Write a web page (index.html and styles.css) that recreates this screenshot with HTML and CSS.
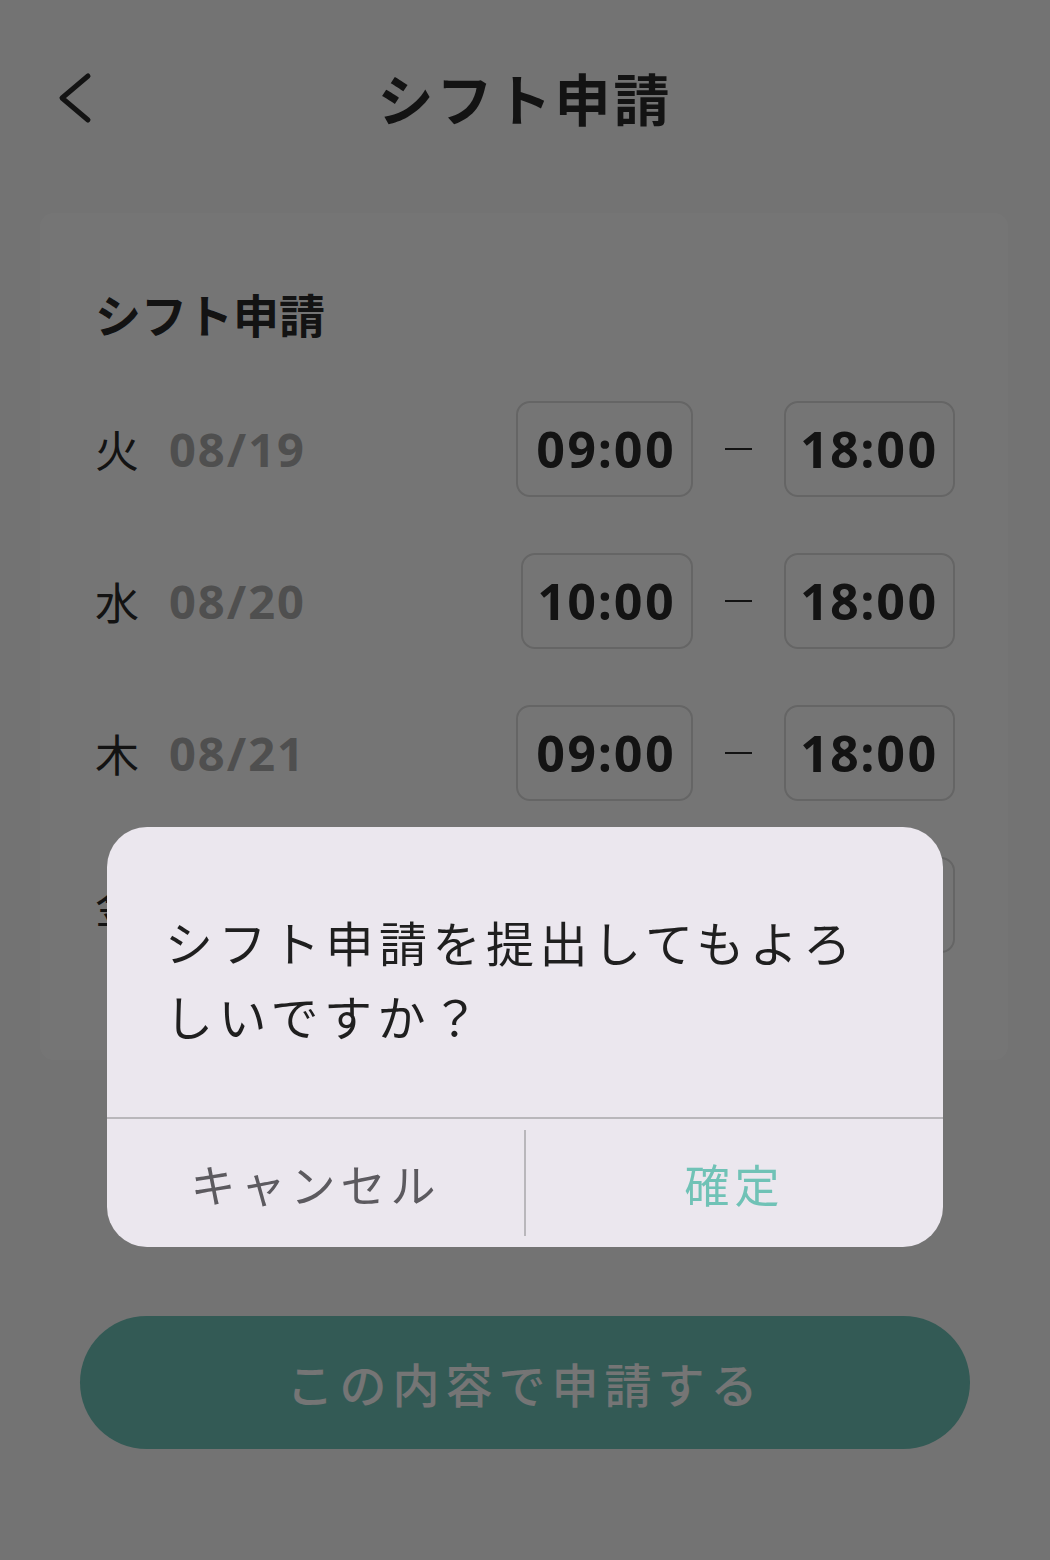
FILE: index.html
```html
<!DOCTYPE html>
<html lang="ja">

<head>
  <meta charset="utf-8">
  <title>シフト申請</title>
  <link rel="stylesheet" href="styles.css">
</head>

<body>
  <header class="topbar">
    <button class="back-btn" aria-label="戻る">
      <svg width="40" height="56" viewBox="0 0 40 56">
        <polyline points="32,4 6,26 32,48" fill="none" stroke="currentColor" stroke-width="5"
          stroke-linecap="round" stroke-linejoin="round" />
      </svg>
    </button>
    <h1 class="page-title">シフト申請</h1>
  </header>

  <section class="card">
    <h2 class="card-title">シフト申請</h2>
    <ul class="shift-list">
      <li class="shift-row">
        <div class="shift-day"><span class="day">火</span><span class="date">08/19</span></div>
        <div class="times">
          <span class="time-box">09:00</span>
          <span class="dash"></span>
          <span class="time-box">18:00</span>
        </div>
      </li>
      <li class="shift-row">
        <div class="shift-day"><span class="day">水</span><span class="date">08/20</span></div>
        <div class="times">
          <span class="time-box">10:00</span>
          <span class="dash"></span>
          <span class="time-box">18:00</span>
        </div>
      </li>
      <li class="shift-row">
        <div class="shift-day"><span class="day">木</span><span class="date">08/21</span></div>
        <div class="times">
          <span class="time-box">09:00</span>
          <span class="dash"></span>
          <span class="time-box">18:00</span>
        </div>
      </li>
      <li class="shift-row">
        <div class="shift-day"><span class="day">金</span><span class="date">08/22</span></div>
        <div class="times">
          <span class="time-box">09:00</span>
          <span class="dash"></span>
          <span class="time-box">18:00</span>
        </div>
      </li>
    </ul>
  </section>

  <button class="submit-btn">この内容で申請する</button>

  <!-- confirm dialog -->
  <div class="modal-backdrop">
    <div class="dialog">
      <p class="dialog-message">シフト申請を提出してもよろしいですか？</p>
      <div class="dialog-actions">
        <button class="dialog-btn cancel">キャンセル</button>
        <span class="dialog-sep"></span>
        <button class="dialog-btn confirm">確定</button>
      </div>
    </div>
  </div>
</body>

</html>
```

FILE: styles.css
```css
body {
  margin: 0;
  background-color: #fafafa;
  color: #2b2b2b;
  font-family: "Noto Sans CJK JP", sans-serif;
}

button {
  font-family: inherit;
  border: none;
  background: none;
  padding: 0;
  cursor: pointer;
}

/* Header */
.topbar {
  height: 200px;
  display: grid;
  grid-template-columns: 1fr auto 1fr;
  align-items: center;
}

.back-btn {
  justify-self: start;
  margin-left: 56px;
  color: #2b2b2b;
  display: flex;
}

.page-title {
  margin: 0 0 6px;
  font-size: 56px;
  font-weight: 700;
  letter-spacing: 3px;
  line-height: 1;
}

/* Card */
.card {
  margin: 13px 42px 0 40px;
  background-color: #fff;
  border-radius: 14px;
  padding: 70px 53px 107px 55px;
}

.card-title {
  margin: 0 0 58px;
  font-size: 46px;
  line-height: 60px;
  font-weight: 700;
}

.shift-list {
  list-style-type: none;
  margin: 0;
  padding: 0;
  display: flex;
  flex-direction: column;
  gap: 56px;
}

.shift-row {
  height: 96px;
  display: flex;
  align-items: center;
  justify-content: space-between;
}

.shift-day {
  display: flex;
  align-items: center;
}

.day {
  font-size: 44px;
  margin-right: 30px;
}

.date {
  font-family: "Open Sans", sans-serif;
  font-weight: 700;
  font-size: 47px;
  letter-spacing: 2px;
  color: #acacac;
}

.times {
  display: flex;
  align-items: center;
  gap: 32px;
}

.time-box {
  box-sizing: border-box;
  height: 96px;
  display: flex;
  align-items: center;
  padding: 0 15px 0 17px;
  border: 2px solid #dcdcdc;
  border-radius: 14px;
  font-family: "Open Sans", sans-serif;
  font-weight: 700;
  font-size: 50px;
  letter-spacing: 1px;
  font-variant-numeric: proportional-nums;
}

.dash {
  width: 27px;
  height: 2px;
  background-color: #2b2b2b;
}

/* Submit button */
.submit-btn {
  display: block;
  width: 890px;
  height: 133px;
  margin: 256px 0 0 80px;
  border-radius: 67px;
  background-color: #6fc4b9;
  color: #fff;
  font-size: 47px;
  font-weight: 500;
  letter-spacing: 6px;
}

/* Confirm dialog */
.modal-backdrop {
  position: fixed;
  inset: 0;
  background-color: rgba(0, 0, 0, 0.54);
  display: flex;
  justify-content: center;
  align-items: flex-start;
  padding-top: 827px;
}

.dialog {
  width: 836px;
  background-color: #ebe7ee;
  border-radius: 40px;
  overflow: hidden;
}

.dialog-message {
  margin: 0;
  padding: 77px 58px 65px;
  font-size: 48px;
  line-height: 74px;
  letter-spacing: 5.5px;
  color: #1f1f1f;
}

.dialog-actions {
  height: 128px;
  border-top: 2px solid #b9b7bb;
  display: flex;
  align-items: center;
}

.dialog-btn {
  flex: 1;
  height: 100%;
  font-size: 45px;
  letter-spacing: 5px;
}

.dialog-btn.cancel {
  color: #5c5a5f;
}

.dialog-btn.confirm {
  color: #70c2b6;
}

.dialog-sep {
  width: 2px;
  height: 106px;
  background-color: #b9b7bb;
}
```
